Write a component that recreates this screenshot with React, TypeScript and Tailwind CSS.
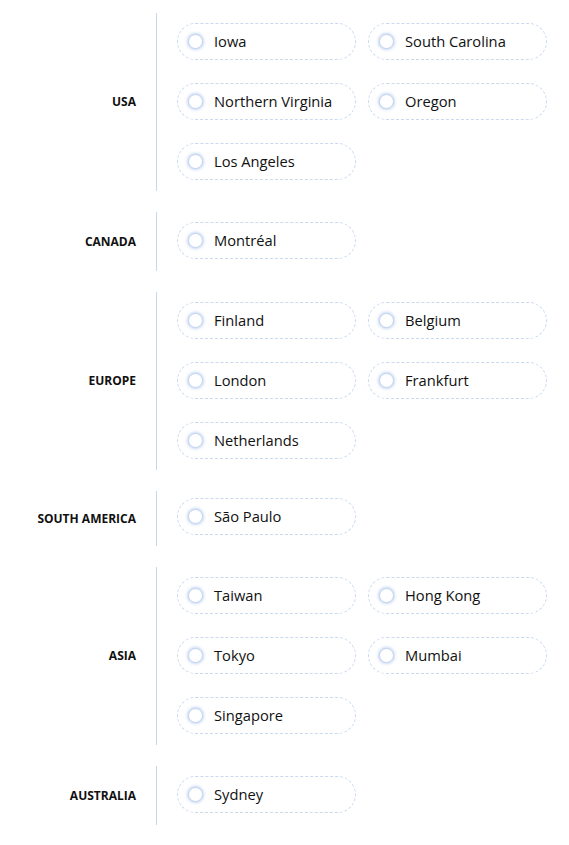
import React from "react";

const sections: { name: string; items: string[]; pad: string }[] = [
  { name: "USA", items: ["Iowa", "South Carolina", "Northern Virginia", "Oregon", "Los Angeles"], pad: "pt-[10px] pb-[11px]" },
  { name: "Canada", items: ["Montréal"], pad: "pt-[10px] pb-[12px]" },
  { name: "Europe", items: ["Finland", "Belgium", "London", "Frankfurt", "Netherlands"], pad: "pt-[10px] pb-[11px]" },
  { name: "South America", items: ["São Paulo"], pad: "pt-[7px] pb-[11px]" },
  { name: "Asia", items: ["Taiwan", "Hong Kong", "Tokyo", "Mumbai", "Singapore"], pad: "pt-[10px] pb-[11px]" },
  { name: "Australia", items: ["Sydney"], pad: "pt-[10px] pb-[12px]" },
];

function Pill({ label }: { label: string }) {
  return (
    <label className="flex h-[37px] items-center rounded-full border border-dashed border-[#c9d9ef] pl-[10px] cursor-pointer">
      <span className="h-[15px] w-[15px] rounded-full border border-[#c3d4ee] bg-white shadow-[0_0_3px_1px_rgba(150,180,235,0.55)]" />
      <span className="ml-[11px] text-[14.7px] leading-none text-[#111]">{label}</span>
    </label>
  );
}

export default function App() {
  return (
    <div
      className="flex w-[569px] flex-col gap-[21px] bg-white pt-[13px] pb-[20px]"
      style={{ fontFamily: '"Open Sans", "Noto Sans", sans-serif' }}
    >
      {sections.map((s) => (
        <div key={s.name} className="flex">
          <div className="flex w-[156px] shrink-0 items-center justify-end pr-[20px]">
            <span className="text-[12px] font-bold uppercase text-[#111]">{s.name}</span>
          </div>
          <div className={`border-l border-[#c6d8f0] pl-[20px] ${s.pad}`}>
            <div className="grid w-[370px] grid-cols-2 gap-x-[12px] gap-y-[23px]">
              {s.items.map((it) => (
                <Pill key={it} label={it} />
              ))}
            </div>
          </div>
        </div>
      ))}
    </div>
  );
}
